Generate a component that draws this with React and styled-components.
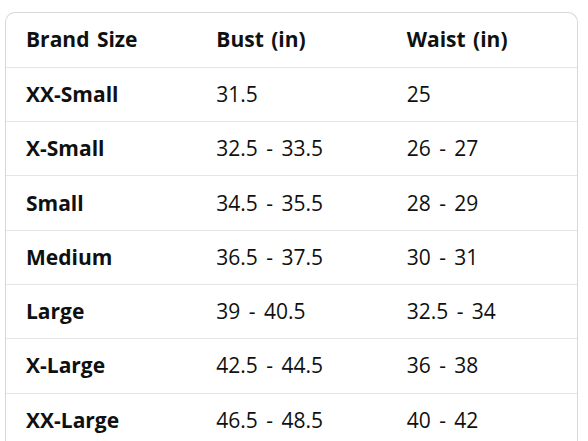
import styled, { createGlobalStyle } from "styled-components";

const GlobalStyle = createGlobalStyle`
  html, body {
    margin: 0;
    padding: 0;
    background: #fff;
  }
  body {
    font-family: "Open Sans", "Noto Sans", sans-serif;
    color: #0f1111;
  }
`

const Page = styled.div`
  width: 588px;
  height: 441px;
  overflow: hidden;
  padding: 12px 10px 0 5px;
  box-sizing: border-box;
`

const Card = styled.div`
  border: 1px solid #d5d9d9;
  border-bottom: none;
  border-radius: 10px 10px 0 0;
  overflow: hidden;
`

const Table = styled.table`
  width: 100%;
  border-collapse: collapse;
  table-layout: fixed;
`

const Cell = styled.td`
  height: 54.3px;
  padding: 0 0 0 20px;
  box-sizing: border-box;
  font-size: 21px;
  font-weight: ${p => (p.$bold ? 700 : 400)};
  word-spacing: ${p => (p.$bold ? 2 : 3)}px;
  line-height: 1;
  color: #0f1111;
  border-bottom: 1px solid #e3e6e6;
  text-align: left;
  vertical-align: middle;
`

const rows = [
  ["XX-Small", "31.5", "25"],
  ["X-Small", "32.5 - 33.5", "26 - 27"],
  ["Small", "34.5 - 35.5", "28 - 29"],
  ["Medium", "36.5 - 37.5", "30 - 31"],
  ["Large", "39 - 40.5", "32.5 - 34"],
  ["X-Large", "42.5 - 44.5", "36 - 38"],
  ["XX-Large", "46.5 - 48.5", "40 - 42"],
];

export default function App() {
  return (
    <Page>
      <GlobalStyle />
      <Card>
        <Table>
          <thead>
            <tr>
              <Cell as="th" $bold>Brand Size</Cell>
              <Cell as="th" $bold>Bust (in)</Cell>
              <Cell as="th" $bold>Waist (in)</Cell>
            </tr>
          </thead>
          <tbody>
            {rows.map(r => (
              <tr key={r[0]}>
                <Cell $bold>{r[0]}</Cell>
                <Cell>{r[1]}</Cell>
                <Cell>{r[2]}</Cell>
              </tr>
            ))}
          </tbody>
        </Table>
      </Card>
    </Page>
  );
}
